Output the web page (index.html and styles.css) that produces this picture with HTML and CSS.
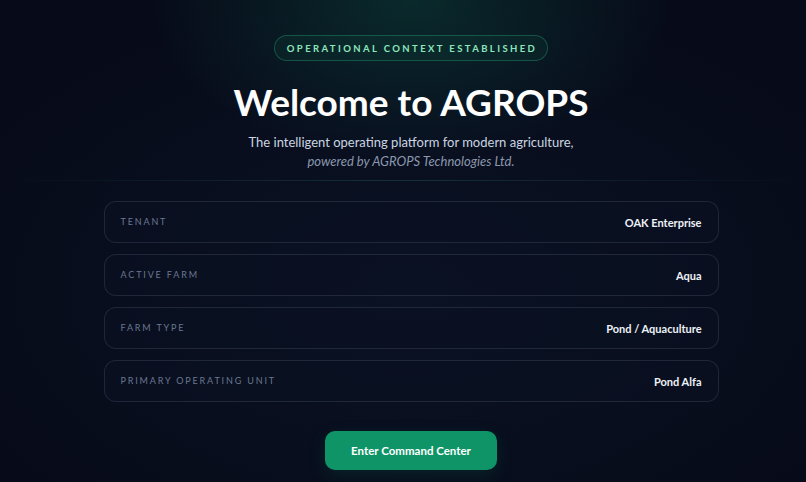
FILE: index.html
```html
<!DOCTYPE html>
<html lang="en">
<head>
<meta charset="utf-8">
<title>AGROPS</title>
<link rel="stylesheet" href="styles.css">
</head>
<body>
<main class="page">
  <div class="badge">OPERATIONAL CONTEXT ESTABLISHED</div>
  <h1 class="title">Welcome to AGROPS</h1>
  <p class="subtitle">The intelligent operating platform for modern agriculture,<br><em>powered by AGROPS Technologies Ltd.</em></p>
  <div class="divider"></div>
  <section class="cards">
    <div class="card"><span class="label">TENANT</span><span class="value">OAK Enterprise</span></div>
    <div class="card"><span class="label">ACTIVE FARM</span><span class="value">Aqua</span></div>
    <div class="card"><span class="label">FARM TYPE</span><span class="value">Pond / Aquaculture</span></div>
    <div class="card"><span class="label">PRIMARY OPERATING UNIT</span><span class="value">Pond Alfa</span></div>
  </section>
  <button class="cta">Enter Command Center</button>
</main>
</body>
</html>
```
FILE: styles.css
```css
* { box-sizing: border-box; }
html, body { margin: 0; height: 100%; }
body {
  background: #070b19;
  font-family: Lato, "Open Sans", sans-serif;
  color: #e2e8f0;
  overflow: hidden;
}
.page {
  min-height: 482px;
  display: flex;
  flex-direction: column;
  align-items: center;
  padding: 35px 0 0 16px;
  background:
    radial-gradient(ellipse 260px 160px at 51% 0%, rgba(16, 120, 90, 0.28), rgba(16, 120, 90, 0) 100%),
    radial-gradient(ellipse 500px 300px at 51% 60%, rgba(20, 40, 70, 0.25), rgba(20, 40, 70, 0) 100%),
    #070b19;
}
.badge {
  height: 26px;
  padding: 0 10px 0 12px;
  border: 1px solid rgba(52, 211, 153, 0.28);
  border-radius: 13px;
  background: rgba(16, 80, 60, 0.18);
  color: #8ee6be;
  font-size: 9.5px;
  font-weight: 700;
  letter-spacing: 2.4px;
  display: flex;
  align-items: center;
}
.title {
  margin: 19px 0 0;
  font-size: 37px;
  line-height: 44px;
  font-weight: 700;
  color: #ffffff;
}
.subtitle {
  margin: 9px 0 0;
  text-align: center;
  font-size: 13px;
  line-height: 19px;
  color: #cbd5e1;
}
.subtitle em { color: #8b98ad; }
.divider {
  align-self: stretch;
  height: 1px;
  margin: 9px 0 0 -16px;
  background: linear-gradient(90deg, rgba(40,110,110,0) 0%, rgba(40,110,110,0.35) 50%, rgba(40,110,110,0) 100%);
}
.cards {
  width: 615px;
  margin-top: 20px;
  display: flex;
  flex-direction: column;
  gap: 11px;
}
.card {
  height: 42px;
  border: 1px solid rgba(148, 163, 184, 0.16);
  border-radius: 12px;
  background: rgba(10, 16, 34, 0.6);
  display: flex;
  justify-content: space-between;
  align-items: center;
  padding: 0 16px;
}
.label {
  font-size: 9px;
  letter-spacing: 1.85px;
  color: #6b7891;
  margin-top: -2px;
}
.value {
  font-size: 11px;
  font-weight: 700;
  color: #eef2f7;
}
.cta {
  margin-top: 29px;
  width: 172px;
  height: 39px;
  border: none;
  border-radius: 10px;
  background: #0f9468;
  color: #ffffff;
  font-family: inherit;
  font-size: 11.5px;
  font-weight: 700;
  box-shadow: 0 6px 18px rgba(16, 148, 104, 0.15);
}
```
